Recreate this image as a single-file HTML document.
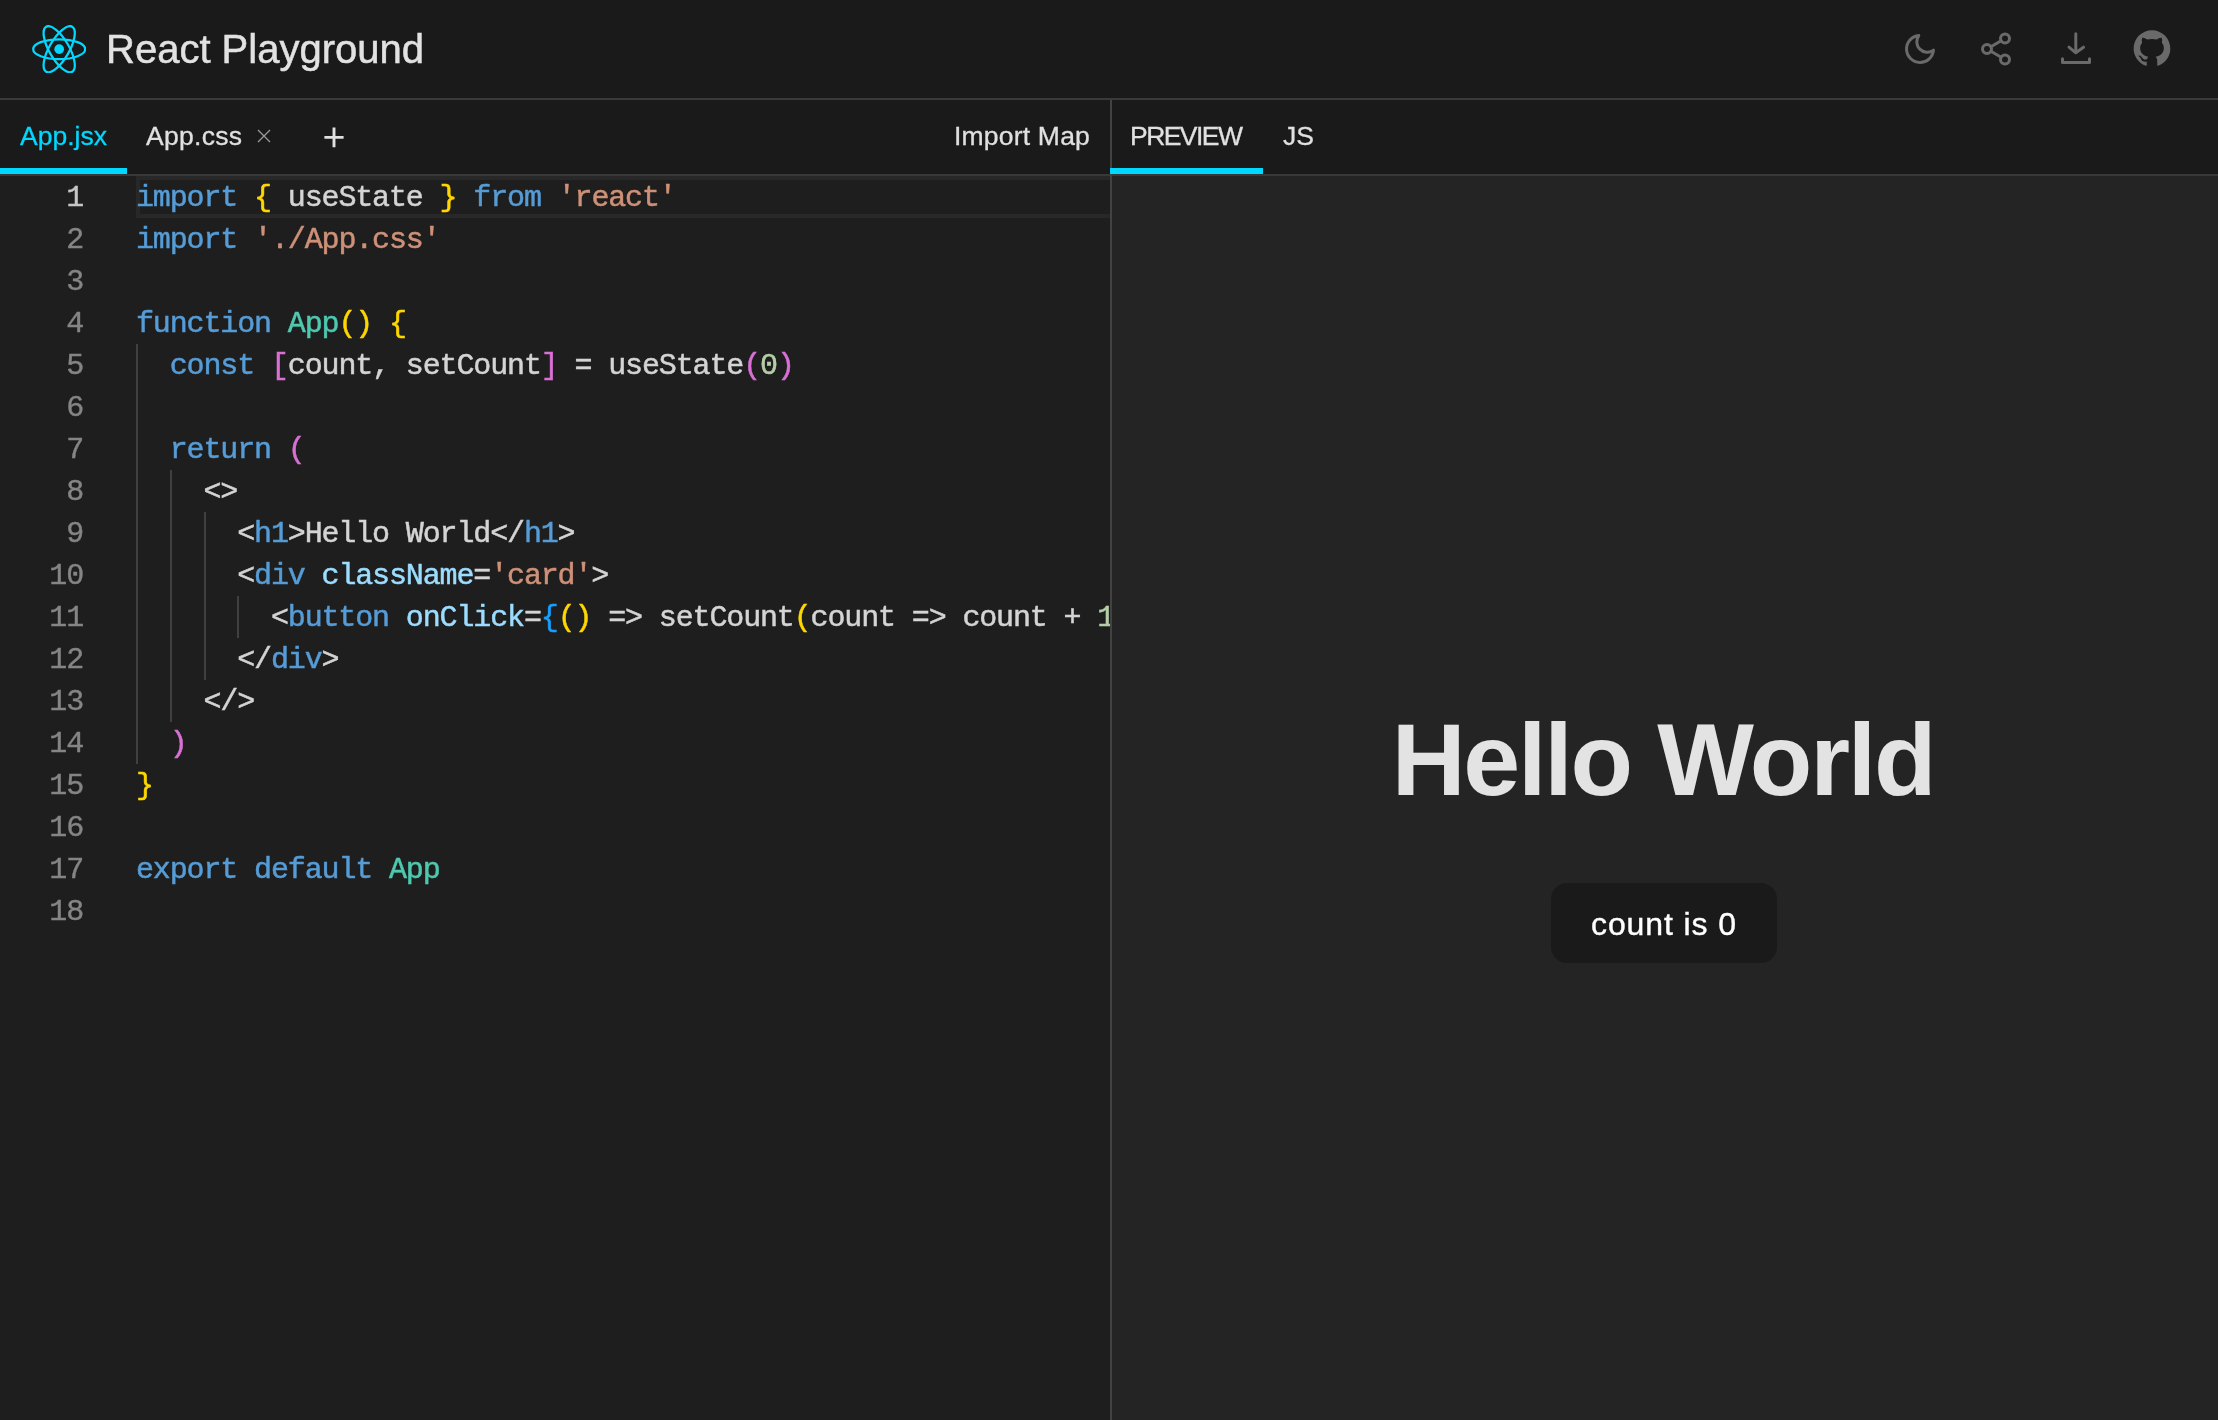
<!DOCTYPE html>
<html><head><meta charset="utf-8">
<style>
*{margin:0;padding:0;box-sizing:border-box}
html,body{width:2218px;height:1420px;overflow:hidden;background:#1a1a1a;font-family:"Liberation Sans",sans-serif}
.abs{position:absolute}
#header{left:0;top:0;width:2218px;height:98px;background:#1a1a1a}
#hborder{left:0;top:98px;width:2218px;height:2px;background:#3a3a3a}
#title{left:106px;-webkit-text-stroke:0.5px currentColor;will-change:transform;top:26px;font-size:40px;line-height:46px;color:#e2e2e2;white-space:nowrap}
#tabbar{left:0;top:100px;width:2218px;height:74px;background:#1a1a1a}
#tborder{left:0;top:174px;width:2218px;height:2px;background:#383838}
.tab{will-change:transform;-webkit-text-stroke:0.3px currentColor;font-size:26.5px;line-height:30px;color:#e0e0e0;white-space:nowrap;top:120.5px}
#editor{left:0;top:176px;width:1110px;height:1244px;background:#1e1e1e;overflow:hidden}
#preview{left:1112px;top:176px;width:1106px;height:1244px;background:#242424}
#divider{left:1110px;top:100px;width:2px;height:1320px;background:#424242}
.ul{height:6px;background:#00d8ff;top:168px}
.code{position:absolute;will-change:transform;-webkit-text-stroke:0.5px currentColor;left:136px;font-family:"Liberation Mono",monospace;font-size:30px;letter-spacing:-1.14px;line-height:42px;color:#d4d4d4;white-space:pre}
.ln{position:absolute;will-change:transform;-webkit-text-stroke:0.4px currentColor;left:0;width:83px;text-align:right;font-family:"Liberation Mono",monospace;font-size:30px;letter-spacing:-1.14px;line-height:42px;color:#858585;white-space:pre}
.guide{position:absolute;width:2px;background:#404040}
.k{color:#569cd6}.s{color:#ce9178}.t{color:#4ec9b0}.b1{color:#ffd700}.b2{color:#da70d6}.b3{color:#179fff}.n{color:#b5cea8}.a{color:#9cdcfe}
</style></head>
<body>
<div id="header" class="abs"></div>
<svg class="abs" style="left:31.8px;top:24.7px" width="54.4" height="48.4" viewBox="-11.5 -10.23174 23 20.46348">
 <circle cx="0" cy="0" r="2.05" fill="#00d8ff"/>
 <g stroke="#00d8ff" stroke-width="0.95" fill="none">
  <ellipse rx="11" ry="4.2"/>
  <ellipse rx="11" ry="4.2" transform="rotate(60)"/>
  <ellipse rx="11" ry="4.2" transform="rotate(120)"/>
 </g>
</svg>
<div id="title" class="abs">React Playground</div>

<div id="hborder" class="abs"></div>
<div id="tabbar" class="abs"></div>
<div class="abs tab" style="left:20px;color:#00d8ff">App.jsx</div>
<div class="abs ul" style="left:0;width:127px"></div>
<div class="abs tab" style="left:146px;letter-spacing:0.3px">App.css</div>
<div class="abs tab" style="left:954px;letter-spacing:0.2px">Import Map</div>
<div class="abs tab" style="left:1129.5px;letter-spacing:-1.55px">PREVIEW</div>
<div class="abs tab" style="left:1283px">JS</div>

<div id="tborder" class="abs"></div>

<div id="editor" class="abs"></div>
<div id="edclip" class="abs" style="left:0;top:176px;width:1110px;height:1244px;overflow:hidden">
<div style="position:relative;top:-176px">
<div class="abs" style="left:136px;top:176px;width:974px;height:42px;border:4px solid #282828;border-right:none"></div>
<div class="guide" style="left:136px;top:344px;height:420px"></div>
<div class="guide" style="left:170px;top:470px;height:252px"></div>
<div class="guide" style="left:204px;top:512px;height:168px"></div>
<div class="guide" style="left:237px;top:596px;height:42px"></div>
<div class="ln" style="top:177px;color:#c6c6c6">1</div>
<div class="code" style="top:177px"><span class="k">import</span> <span class="b1">{</span> useState <span class="b1">}</span> <span class="k">from</span> <span class="s">'react'</span></div>
<div class="ln" style="top:219px">2</div>
<div class="code" style="top:219px"><span class="k">import</span> <span class="s">'./App.css'</span></div>
<div class="ln" style="top:261px">3</div>
<div class="code" style="top:261px"></div>
<div class="ln" style="top:303px">4</div>
<div class="code" style="top:303px"><span class="k">function</span> <span class="t">App</span><span class="b1">()</span> <span class="b1">{</span></div>
<div class="ln" style="top:345px">5</div>
<div class="code" style="top:345px">  <span class="k">const</span> <span class="b2">[</span>count, setCount<span class="b2">]</span> = useState<span class="b2">(</span><span class="n">0</span><span class="b2">)</span></div>
<div class="ln" style="top:387px">6</div>
<div class="code" style="top:387px"></div>
<div class="ln" style="top:429px">7</div>
<div class="code" style="top:429px">  <span class="k">return</span> <span class="b2">(</span></div>
<div class="ln" style="top:471px">8</div>
<div class="code" style="top:471px">    &lt;&gt;</div>
<div class="ln" style="top:513px">9</div>
<div class="code" style="top:513px">      &lt;<span class="k">h1</span>&gt;Hello World&lt;/<span class="k">h1</span>&gt;</div>
<div class="ln" style="top:555px">10</div>
<div class="code" style="top:555px">      &lt;<span class="k">div</span> <span class="a">className</span>=<span class="s">'card'</span>&gt;</div>
<div class="ln" style="top:597px">11</div>
<div class="code" style="top:597px">        &lt;<span class="k">button</span> <span class="a">onClick</span>=<span class="b3">{</span><span class="b1">()</span> =&gt; setCount<span class="b1">(</span>count =&gt; count + <span class="n">1</span><span class="b1">)</span><span class="b3">}</span>&gt;count is <span class="b3">{</span>count<span class="b3">}</span>&lt;/<span class="k">button</span>&gt;</div>
<div class="ln" style="top:639px">12</div>
<div class="code" style="top:639px">      &lt;/<span class="k">div</span>&gt;</div>
<div class="ln" style="top:681px">13</div>
<div class="code" style="top:681px">    &lt;/&gt;</div>
<div class="ln" style="top:723px">14</div>
<div class="code" style="top:723px">  <span class="b2">)</span></div>
<div class="ln" style="top:765px">15</div>
<div class="code" style="top:765px"><span class="b1">}</span></div>
<div class="ln" style="top:807px">16</div>
<div class="code" style="top:807px"></div>
<div class="ln" style="top:849px">17</div>
<div class="code" style="top:849px"><span class="k">export</span> <span class="k">default</span> <span class="t">App</span></div>
<div class="ln" style="top:891px">18</div>
<div class="code" style="top:891px"></div>
</div></div>
<div id="preview" class="abs"></div>
<div id="divider" class="abs"></div>
<div class="abs ul" style="left:1110px;width:153px"></div>

<div class="abs" style="left:1110px;top:700px;width:1106px;text-align:center;will-change:transform;font-weight:bold;font-size:102.4px;line-height:120px;letter-spacing:-2.2px;color:#e3e3e3;white-space:nowrap">Hello World</div>
<div class="abs" style="left:1551px;top:883px;width:226px;height:80px;border-radius:16px;background:#1a1a1a"></div>
<div class="abs" style="left:1551px;top:903.5px;width:226px;will-change:transform;-webkit-text-stroke:0.4px currentColor;text-align:center;font-size:32px;line-height:40px;letter-spacing:0.9px;color:#ffffff;white-space:nowrap">count is 0</div>

<svg class="abs" style="left:1902px;top:31px" width="36" height="36" viewBox="0 0 24 24" fill="none" stroke="#6a6a6a" stroke-width="2" stroke-linecap="round" stroke-linejoin="round"><path d="M21 12.79A9 9 0 1 1 11.21 3 7 7 0 0 0 21 12.79z"/></svg>
<svg class="abs" style="left:1978px;top:31px" width="36" height="36" viewBox="0 0 24 24" fill="none" stroke="#6a6a6a" stroke-width="2" stroke-linecap="round" stroke-linejoin="round"><circle cx="18" cy="5" r="3"/><circle cx="6" cy="12" r="3"/><circle cx="18" cy="19" r="3"/><line x1="8.59" y1="13.51" x2="15.42" y2="17.49"/><line x1="15.41" y1="6.51" x2="8.59" y2="10.49"/></svg>
<svg class="abs" style="left:2050px;top:20px" width="52" height="56" viewBox="2050 20 52 56" fill="none" stroke="#6a6a6a" stroke-width="3" stroke-linecap="round" stroke-linejoin="round"><path d="M2075.8 33.7V52.5M2069 47.2L2075.8 52.8L2083.5 47.2M2062.5 58.7V62.5H2089.5V58.7"/></svg>
<svg class="abs" style="left:2131px;top:27px" width="42" height="42" viewBox="0 0 1024 1024"><path fill="#6a6a6a" d="M511.6 76.3C264.3 76.2 64 276.4 64 523.5 64 718.9 189.3 885 363.8 946c23.5 5.9 19.9-10.8 19.9-22.2v-77.5c-135.7 15.9-141.2-73.9-150.3-88.9C215 726 171.5 718 184.5 703c30.9-15.9 62.4 4 98.9 57.9 26.4 39.1 77.9 32.5 104 26 5.7-23.5 17.9-44.5 34.7-60.8-140.6-25.2-199.2-111-199.2-213 0-49.5 16.3-95 48.3-131.7-20.4-60.5 1.9-112.300 4.9-120 58.1-5.2 118.5 41.6 123.2 45.3 33-8.9 70.7-13.6 112.9-13.6 42.4 0 80.2 4.9 113.5 13.9 11.3-8.6 67.3-48.8 121.3-43.9 2.9 7.7 24.7 58.3 5.5 118 32.4 36.8 48.9 82.7 48.9 132.3 0 102.2-59 188.1-200 212.9a127.5 127.5 0 0138.1 91v112.5c.8 9 0 17.9 15 17.9 177.1-59.7 304.6-227 304.6-424.1 0-247.2-200.4-447.3-447.5-447.3z"/></svg>

<svg class="abs" style="left:256px;top:128px" width="16" height="16" viewBox="0 0 16 16" stroke="#9a9a9a" stroke-width="1.3"><path d="M2 2L14 14M14 2L2 14"/></svg>
<svg class="abs" style="left:322px;top:125px" width="24" height="24" viewBox="0 0 24 24" stroke="#e0e0e0" stroke-width="2.9"><path d="M12 2.6V22.3M2.4 12.4H21.6"/></svg>
</body></html>
